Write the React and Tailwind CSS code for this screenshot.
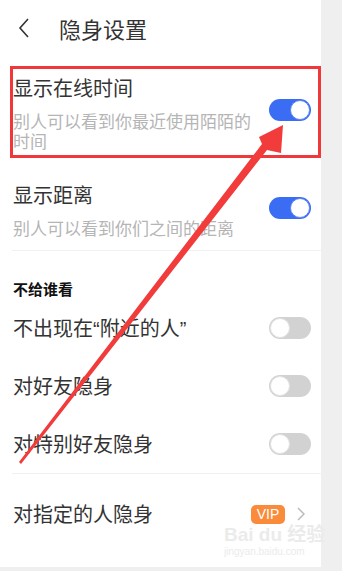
import React from 'react';

const font = { fontFamily: '"Noto Sans CJK SC", "Noto Sans", sans-serif' };
const latin = { fontFamily: '"Liberation Sans", sans-serif' };

function Toggle({ on }) {
  return on ? (
    <div className="w-[42px] h-[22px] rounded-full bg-[#3a6cf4] flex items-center justify-end pr-[1px] shrink-0">
      <div className="w-[20px] h-[20px] rounded-full bg-white border border-[#5a86f7]" />
    </div>
  ) : (
    <div className="w-[42px] h-[22px] rounded-full bg-[#d2d2d2] flex items-center justify-start pl-[1px] shrink-0">
      <div className="w-[20px] h-[20px] rounded-full bg-white border border-[#e2e2e2]" />
    </div>
  );
}

function SwitchRow({ title, on }) {
  return (
    <div className="h-[58px] flex items-center justify-between pl-[13px] pr-[10px]">
      <span className="text-[20px] leading-[26px] text-[#333]">{title}</span>
      <Toggle on={on} />
    </div>
  );
}

export default function App() {
  return (
    <div className="relative w-[342px] h-[571px] bg-[#efefef] overflow-hidden" style={font}>
      <div className="w-[321px] h-[567px] bg-white">
        {/* header */}
        <div className="h-[56px] flex items-center">
          <svg className="ml-[18px]" width="12" height="20" viewBox="0 0 12 20">
            <path d="M10 1 L2 10 L10 19" fill="none" stroke="#333" strokeWidth="1.6" />
          </svg>
          <span className="ml-[29px] text-[22px] leading-[28px] text-[#333]">隐身设置</span>
        </div>

        {/* highlighted row */}
        <div className="mt-[10px] ml-[10px] w-[311px] border-[3px] border-[#f0383a] pt-[6px] pb-[4px] pl-0 pr-[7px] flex items-center justify-between">
          <div>
            <div className="text-[20px] leading-[26px] text-[#333]">显示在线时间</div>
            <div className="mt-[10px] w-[245px] text-[17px] leading-[20px] text-[#b5b5b5]">
              别人可以看到你最近使用陌陌的时间
            </div>
          </div>
          <div className="-mt-[6px]">
            <Toggle on />
          </div>
        </div>

        {/* distance row */}
        <div className="pt-[24px] pb-[12px] pl-[13px] pr-[10px] flex items-center justify-between">
          <div>
            <div className="text-[20px] leading-[26px] text-[#333]">显示距离</div>
            <div className="mt-[10px] text-[17px] leading-[20px] text-[#b5b5b5]">别人可以看到你们之间的距离</div>
          </div>
          <div className="-mt-[4px]">
            <Toggle on />
          </div>
        </div>
        <div className="ml-[12px] h-px bg-[#f1f1f1]" />

        <div className="pt-[28px] pl-[13px] text-[15px] leading-[20px] font-bold text-[#111]">不给谁看</div>
        <SwitchRow
          title={
            <>
              不出现在<span style={latin}>“</span>附近的人<span style={latin}>”</span>
            </>
          }
          on={false}
        />
        <SwitchRow title="对好友隐身" on={false} />
        <SwitchRow title="对特别好友隐身" on={false} />
        <div className="ml-[12px] h-px bg-[#f1f1f1]" />

        <div className="h-[80px] flex items-center justify-between pl-[13px] pr-[16px]">
          <span className="text-[20px] leading-[26px] text-[#333]">对指定的人隐身</span>
          <div className="flex items-center gap-[12px]">
            <span className="w-[34px] h-[19px] rounded-[5px] bg-[#f98b3b] text-white text-[14px] leading-[19px] text-center" style={latin}>VIP</span>
            <svg width="8" height="14" viewBox="0 0 8 14">
              <path d="M1 1 L7 7 L1 13" fill="none" stroke="#bbb" strokeWidth="1.5" />
            </svg>
          </div>
        </div>
      </div>

      {/* watermark */}
      <div className="absolute left-[224px] top-[524px] text-[#ebebeb] pointer-events-none">
        <div className="text-[19px] leading-[22px] font-bold" style={{ fontFamily: '"Liberation Sans", "Noto Sans CJK SC", sans-serif' }}>Bai du 经验</div>
        <div className="text-[10px] leading-[12px]" style={latin}>jingyan.baidu.com</div>
      </div>

      {/* annotation arrow */}
      <svg className="absolute left-0 top-0 pointer-events-none" width="342" height="571" viewBox="0 0 342 571">
        <polygon
          points="283,125 281,153 267,150 21,464 19,462 262,144 259,137"
          fill="#f23b3b"
        />
      </svg>
    </div>
  );
}
